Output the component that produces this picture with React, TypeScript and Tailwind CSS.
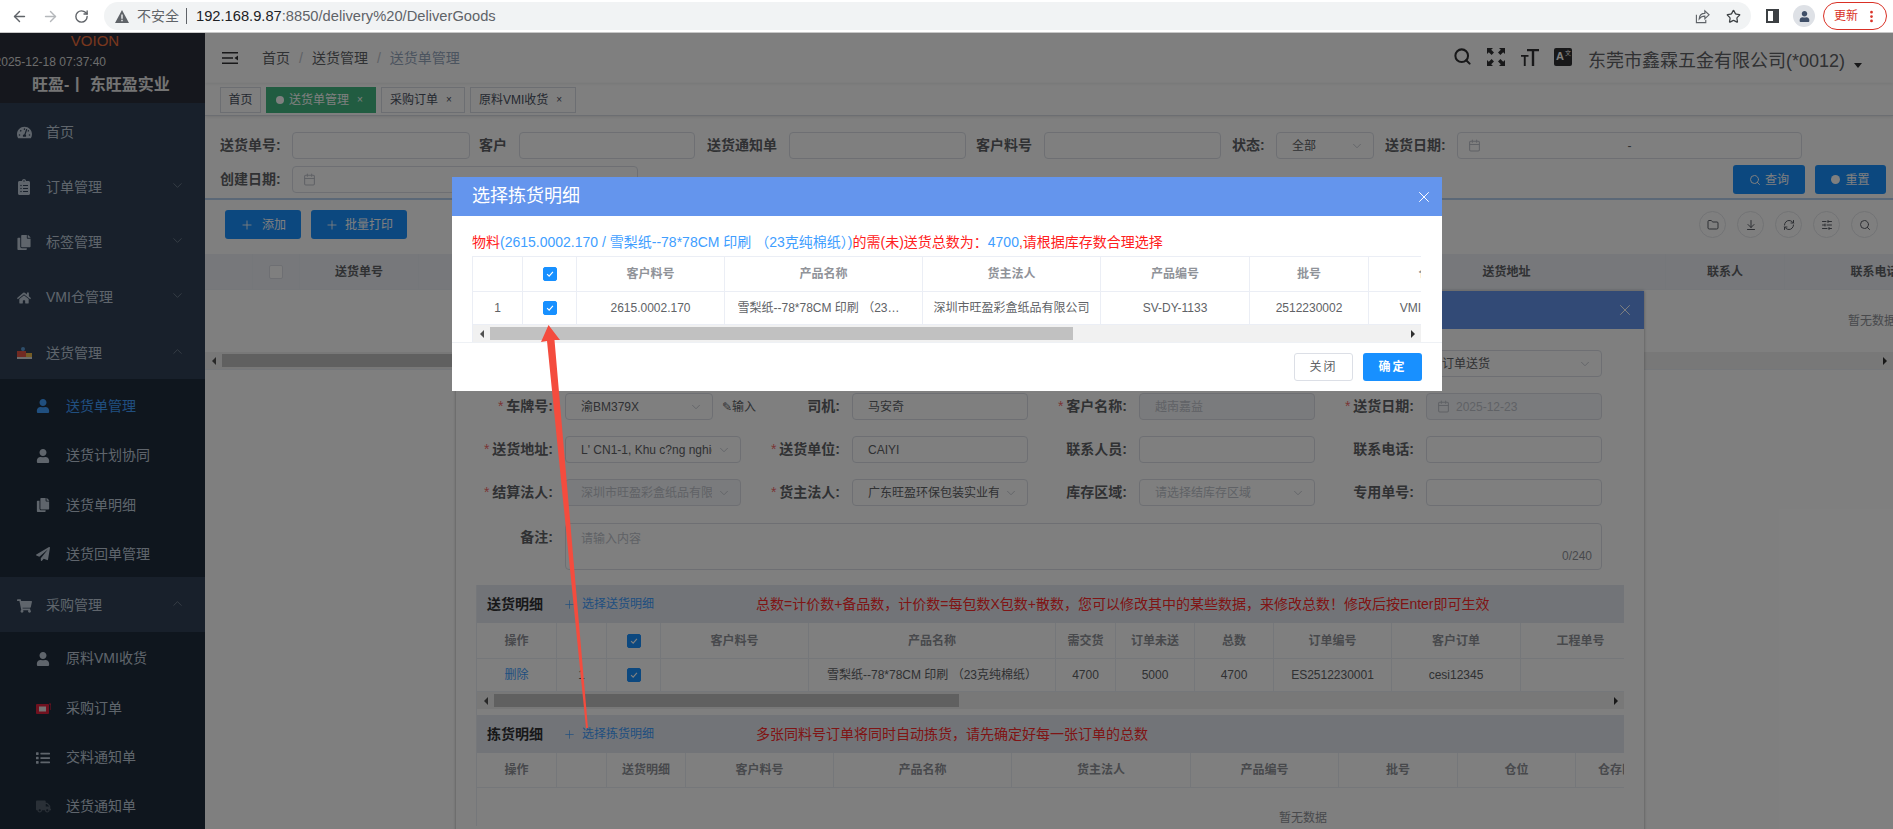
import type { ReactNode } from 'react';
import {
  ArrowDownToLine,
  ArrowLeft,
  ArrowRight,
  Calendar,
  ChevronDown,
  ChevronUp,
  Folder,
  MoreVertical,
  Plus,
  RefreshCw,
  RotateCw,
  Search,
  SlidersHorizontal,
  Star,
  X,
} from 'lucide-react';
import {
  FaClipboardList,
  FaCopy,
  FaHome,
  FaList,
  FaPaperPlane,
  FaShoppingCart,
  FaTachometerAlt,
  FaTruck,
  FaUser,
} from 'react-icons/fa';

function Box({ className = '', children }: { className?: string; children?: ReactNode }) {
  return (
    <div className={`flex h-[27px] shrink-0 items-center rounded-[4px] border border-[#dcdfe6] bg-white px-[15px] text-[12px] text-[#606266] ${className}`}>
      {children}
    </div>
  );
}

function Select({ className = '', children }: { className?: string; children?: ReactNode }) {
  return (
    <Box className={`justify-between !pr-[9px] overflow-hidden whitespace-nowrap ${className}`}>
      <span className="overflow-hidden">{children}</span>
      <ChevronDown className="ml-[5px] h-[14px] w-[14px] shrink-0 text-[#c0c4cc]" strokeWidth={1.5} />
    </Box>
  );
}

function Check({ on = true }: { on?: boolean }) {
  return (
    <span className={`mx-auto flex h-[14px] w-[14px] items-center justify-center rounded-[2px] border ${on ? 'border-[#1890ff] bg-[#1890ff]' : 'border-[#dcdfe6] bg-white'}`}>
      {on && (
        <svg viewBox="0 0 12 12" className="h-[10px] w-[10px]">
          <path d="M2.5 6.2 5 8.6 9.5 3.4" fill="none" stroke="white" strokeWidth="1.4" />
        </svg>
      )}
    </span>
  );
}

function Scrollbar({ thumb, className = '' }: { thumb: string; className?: string }) {
  return (
    <div className={`flex h-[17px] items-center bg-[#f1f1f1] ${className}`}>
      <span className="flex w-[17px] shrink-0 justify-center">
        <span className="h-0 w-0 border-y-[4px] border-r-[4px] border-y-transparent border-r-[#505050]" />
      </span>
      <div className={`h-[13px] shrink-0 bg-[#c1c1c1] ${thumb}`} />
      <span className="ml-auto flex w-[17px] shrink-0 justify-center">
        <span className="h-0 w-0 border-y-[4px] border-l-[4px] border-y-transparent border-l-[#303030]" />
      </span>
    </div>
  );
}

function Cell({ w, head, children }: { w: string; head?: boolean; children?: ReactNode }) {
  return (
    <div className={`flex shrink-0 items-center justify-center overflow-hidden whitespace-nowrap border-r border-[#ebeef5] text-[12px] ${w} ${head ? 'font-bold text-[#909399]' : 'text-[#606266]'}`}>
      {children}
    </div>
  );
}

function Row({ h, children, className = '' }: { h: string; children: ReactNode; className?: string }) {
  return <div className={`flex overflow-hidden border-b border-[#ebeef5] ${h} ${className}`}>{children}</div>;
}

function Label({ className = '', children }: { className?: string; children: ReactNode }) {
  return <span className={`shrink-0 text-[14px] font-bold text-[#606266] ${className}`}>{children}</span>;
}

function FormItem({ label, required, children }: { label: string; required?: boolean; children: ReactNode }) {
  return (
    <div className="flex items-center justify-end">
      <Label className="mr-[12px] whitespace-nowrap">
        {required && <span className="mr-[3px] font-normal text-[#f56c6c]">*</span>}
        {label}
      </Label>
      {children}
    </div>
  );
}

function MenuItem({ icon, label, open, closed }: { icon: ReactNode; label: string; open?: boolean; closed?: boolean }) {
  return (
    <div className="flex h-[55.5px] items-center pl-[17px] pt-[3px] text-[14px] text-[#bfcbd9]">
      <span className="flex w-[29px] shrink-0 items-center">{icon}</span>
      <span>{label}</span>
      {closed && <ChevronDown className="ml-auto mr-[20px] mb-[4px] h-[15px] w-[15px] text-[#7e8a99]" strokeWidth={1.2} />}
      {open && <ChevronUp className="ml-auto mr-[20px] mb-[4px] h-[15px] w-[15px] text-[#7e8a99]" strokeWidth={1.2} />}
    </div>
  );
}

function SubItem({ icon, label, active }: { icon: ReactNode; label: string; active?: boolean }) {
  return (
    <div className={`flex h-[49.5px] items-center bg-[#1f2d3d] pl-[36px] pt-[5px] text-[14px] ${active ? 'text-[#409eff]' : 'text-[#bfcbd9]'}`}>
      <span className="flex w-[30px] shrink-0 items-center">{icon}</span>
      <span>{label}</span>
    </div>
  );
}

function ForkliftIcon() {
  return (
    <svg viewBox="0 0 15 12" className="h-[12px] w-[15px]">
      <rect x="0" y="4" width="9" height="6" fill="#e25545" />
      <circle cx="6" cy="2" r="2" fill="#5b9bd5" />
      <rect x="9" y="6" width="6" height="4" fill="#e8b84a" />
      <rect x="0" y="10" width="15" height="2" fill="#d9d9d9" />
    </svg>
  );
}

function TicketIcon() {
  return (
    <svg viewBox="0 0 15 11" className="h-[11px] w-[15px]">
      <rect x="0" y="1" width="13" height="10" rx="1" fill="#e0223e" />
      <rect x="3" y="3.5" width="7" height="5" fill="#e6e6e6" />
      <path d="M13 1h2v6" fill="none" stroke="#e0223e" strokeWidth="1.2" />
    </svg>
  );
}

const subIcon = 'h-[14px] w-[14px]';

function Sidebar() {
  return (
    <aside className="flex h-full w-[205px] shrink-0 flex-col overflow-hidden bg-[#304156]">
      <div className="flex h-[70px] shrink-0 flex-col bg-[#2b2f3a] text-white">
        <div className="w-[190px] text-center text-[15px] leading-[16px] text-[#f0703a]">VOION</div>
        <div className="mt-[5px] flex w-[106px] justify-end whitespace-nowrap text-[12px] leading-[16px] text-[#d8d8d8]">2025-12-18 07:37:40</div>
        <div className="mt-[5px] pl-[32px] text-[16px] font-bold leading-[20px] text-[#e8e8e8]">旺盈-丨 东旺盈实业</div>
      </div>
      <MenuItem icon={<FaTachometerAlt className="h-[15px] w-[15px]" />} label="首页" />
      <MenuItem icon={<FaClipboardList className="h-[16px] w-[14px]" />} label="订单管理" closed />
      <MenuItem icon={<FaCopy className="h-[15px] w-[14px]" />} label="标签管理" closed />
      <MenuItem icon={<FaHome className="h-[14px] w-[14px]" />} label="VMI仓管理" closed />
      <MenuItem icon={<ForkliftIcon />} label="送货管理" open />
      <SubItem icon={<FaUser className={subIcon} />} label="送货单管理" active />
      <SubItem icon={<FaUser className={subIcon} />} label="送货计划协同" />
      <SubItem icon={<FaCopy className={subIcon} />} label="送货单明细" />
      <SubItem icon={<FaPaperPlane className={subIcon} />} label="送货回单管理" />
      <MenuItem icon={<FaShoppingCart className="h-[14px] w-[15px]" />} label="采购管理" open />
      <SubItem icon={<FaUser className={subIcon} />} label="原料VMI收货" />
      <SubItem icon={<TicketIcon />} label="采购订单" />
      <SubItem icon={<FaList className={subIcon} />} label="交料通知单" />
      <SubItem icon={<FaTruck className="h-[13px] w-[15px] text-[#55606e]" />} label="送货通知单" />
    </aside>
  );
}

function Tab({ label, active, className = '' }: { label: string; active?: boolean; className?: string }) {
  return (
    <div className={`flex h-[26px] shrink-0 items-center border text-[12px] ${active ? 'border-[#42b983] bg-[#42b983] text-white' : 'border-[#d8dce5] bg-white text-[#495060]'} ${className}`}>
      {active && <span className="mr-[5px] h-[8px] w-[8px] rounded-full bg-white" />}
      <span>{label}</span>
      <span className="ml-[8px] text-[10px] leading-none">×</span>
    </div>
  );
}

function BlueButton({ icon, label, className = '' }: { icon: ReactNode; label: string; className?: string }) {
  return (
    <button className={`flex h-[29px] shrink-0 items-center justify-center rounded-[3px] bg-[#1890ff] text-[12px] text-white ${className}`}>
      {icon}
      {label}
    </button>
  );
}

function RoundButton({ children }: { children: ReactNode }) {
  return (
    <span className="flex h-[27px] w-[27px] items-center justify-center rounded-full border border-[#e4e6ea] bg-white text-[#5a5e66]">
      {children}
    </span>
  );
}

function DateBox({ className = '', dash }: { className?: string; dash?: boolean }) {
  return (
    <Box className={`!px-[10px] ${className}`}>
      <Calendar className="h-[13px] w-[13px] text-[#c0c4cc]" />
      {dash && <span className="flex-1 pr-[13px] text-center">-</span>}
    </Box>
  );
}

function MainPage() {
  return (
    <main className="flex h-full min-w-0 flex-1 flex-col overflow-hidden bg-white">
      <header className="flex h-[50px] shrink-0 items-center pl-[17px] pr-[31px] shadow-[0_1px_3px_rgba(0,21,41,0.08)]">
        <svg viewBox="0 0 16 14" className="h-[14px] w-[16px] text-[#303133]">
          <path d="M0 1h16v1.6H0zM0 6.2h11v1.6H0zM0 11.4h16V13H0z" fill="currentColor" />
          <path d="M16 4.5v5L12.5 7z" fill="currentColor" />
        </svg>
        <div className="ml-[24px] flex items-center whitespace-nowrap text-[14px] text-[#606266]">
          <span>首页</span>
          <span className="mx-[9px] text-[#c0c4cc]">/</span>
          <span>送货管理</span>
          <span className="mx-[9px] text-[#c0c4cc]">/</span>
          <span className="text-[#97a8be]">送货单管理</span>
        </div>
        <div className="ml-auto flex items-center text-[#303133]">
          <Search className="mb-[3px] h-[19px] w-[19px]" strokeWidth={2.6} />
          <svg viewBox="0 0 18 18" className="mb-[3px] ml-[15px] h-[18px] w-[18px]" fill="currentColor">
            <path d="M0 0h6L4.2 1.8 7 4.6 4.6 7 1.8 4.2 0 6zM18 0v6l-1.8-1.8L13.4 7 11 4.6l2.8-2.8L12 0zM0 18v-6l1.8 1.8L4.6 11 7 13.4l-2.8 2.8L6 18zM18 18h-6l1.8-1.8L11 13.4l2.4-2.4 2.8 2.8L18 12z" />
          </svg>
          <svg viewBox="0 0 18 18" className="mb-[3px] ml-[16px] h-[18px] w-[18px]" fill="currentColor">
            <path d="M6 1h12v2.2h-4.8V18h-2.4V3.2H6zM0 7h7.5v1.8H4.7V18H2.8V8.8H0z" />
          </svg>
          <span className="relative mb-[3px] ml-[15px] flex h-[18px] w-[18px] items-center rounded-[2px] bg-[#303133] pl-[2px] text-[11px] font-bold leading-none text-white">
            A
            <span className="absolute right-[1px] top-[2px] text-[6px] font-normal">文</span>
          </span>
          <span className="ml-[16px] mt-[7px] whitespace-nowrap text-[18px] text-[#606266]">东莞市鑫霖五金有限公司(*0012)</span>
          <span className="ml-[9px] mt-[14px] h-0 w-0 border-x-[4px] border-t-[5px] border-x-transparent border-t-[#303133]" />
        </div>
      </header>
      <div className="flex h-[33px] shrink-0 items-center gap-[5px] border-b border-[#d8dce5] pl-[15px] pt-[1px] shadow-[0_1px_3px_rgba(0,0,0,0.1)]">
        <div className="flex h-[26px] w-[41px] shrink-0 items-center justify-center border border-[#d8dce5] text-[12px] text-[#495060]">首页</div>
        <Tab label="送货单管理" active className="w-[110px] pl-[9px]" />
        <Tab label="采购订单" className="w-[84px] pl-[8px]" />
        <Tab label="原料VMI收货" className="w-[106px] pl-[8px]" />
      </div>
      <section className="h-[82px] shrink-0 pl-[15px] pt-[16px]">
        <div className="flex items-center">
          <Label className="w-[72px]">送货单号:</Label>
          <Box className="w-[178px]" />
          <Label className="ml-[9px] w-[40px]">客户</Label>
          <Box className="w-[176px]" />
          <Label className="ml-[12px] w-[82px]">送货通知单</Label>
          <Box className="w-[177px]" />
          <Label className="ml-[10px] w-[68px]">客户料号</Label>
          <Box className="w-[177px]" />
          <Label className="ml-[11px] w-[44px]">状态:</Label>
          <Select className="w-[98px]">全部</Select>
          <Label className="ml-[11px] w-[72px]">送货日期:</Label>
          <DateBox dash className="w-[345px]" />
        </div>
        <div className="mt-[6px] flex items-center pr-[7px]">
          <Label className="w-[72px]">创建日期:</Label>
          <DateBox className="w-[346px]" />
          <BlueButton icon={<Search className="mr-[4px] h-[12px] w-[12px]" />} label="查询" className="ml-auto w-[72px]" />
          <BlueButton icon={<span className="mr-[5px] h-[9px] w-[9px] rounded-full bg-white" />} label="重置" className="ml-[10px] w-[71px]" />
        </div>
      </section>
      <div className="flex h-[56px] shrink-0 items-start border-t-2 border-[#b6d0ee] pl-[20px] pr-[15px] pt-[10px]">
        <BlueButton icon={<Plus className="mr-[8px] h-[14px] w-[14px]" strokeWidth={1.5} />} label="添加" className="w-[76px]" />
        <BlueButton icon={<Plus className="mr-[6px] h-[14px] w-[14px]" strokeWidth={1.5} />} label="批量打印" className="ml-[10px] w-[96px]" />
        <div className="ml-auto flex gap-[11px] pt-[1px]">
          <RoundButton><Folder className="h-[12px] w-[12px]" /></RoundButton>
          <RoundButton><ArrowDownToLine className="h-[12px] w-[12px]" /></RoundButton>
          <RoundButton><RefreshCw className="h-[12px] w-[12px]" /></RoundButton>
          <RoundButton><SlidersHorizontal className="h-[12px] w-[12px]" /></RoundButton>
          <RoundButton><Search className="h-[12px] w-[12px]" /></RoundButton>
        </div>
      </div>
      <Row h="h-[36px] shrink-0" className="bg-[#eef1f6]">
        <Cell head w="w-[48px]" />
        <Cell head w="w-[47px]"><Check on={false} /></Cell>
        <Cell head w="w-[119px]"><span className="text-[#606266]">送货单号</span></Cell>
        <Cell head w="w-[116px]"><span className="text-[#606266]">送货类型</span></Cell>
        <Cell head w="w-[813px]" />
        <Cell head w="w-[318px]"><span className="text-[#606266]">送货地址</span></Cell>
        <Cell head w="w-[119px]"><span className="text-[#606266]">联系人</span></Cell>
        <Cell head w="w-[180px]"><span className="text-[#606266]">联系电话</span></Cell>
      </Row>
      <div className="flex h-[62px] shrink-0 items-center justify-start overflow-hidden whitespace-nowrap pl-[1643px] text-[12px] text-[#909399]">暂无数据</div>
      <Scrollbar thumb="w-[1000px]" />
      <div className="border-t border-[#ebeef5]" />
    </main>
  );
}

const deliverCols = ['w-[80px]', 'w-[50px]', 'w-[54px]', 'w-[148px]', 'w-[247px]', 'w-[60px]', 'w-[79px]', 'w-[79px]', 'w-[118px]', 'w-[129px]', 'w-[120px]'];
const deliverHead = ['操作', '', '', '客户料号', '产品名称', '需交货', '订单未送', '总数', '订单编号', '客户订单', '工程单号'];
const deliverBody = ['', '1', '', '', '雪梨纸--78*78CM 印刷 （23克纯棉纸）', '4700', '5000', '4700', 'ES2512230001', 'cesi12345', ''];
const pickCols = ['w-[80px]', 'w-[50px]', 'w-[79px]', 'w-[148px]', 'w-[178px]', 'w-[179px]', 'w-[148px]', 'w-[119px]', 'w-[118px]', 'w-[105px]'];
const pickHead = ['操作', '', '送货明细', '客户料号', '产品名称', '货主法人', '产品编号', '批号', '仓位', '仓存区域名'];

function SectionBar({ title, link, note }: { title: string; link: string; note: string }) {
  return (
    <div className="flex h-[38px] items-center bg-[#e4e8f0] pl-[10px] whitespace-nowrap">
      <span className="w-[76px] text-[14px] font-bold text-[#303133]">{title}</span>
      <Plus className="h-[13px] w-[13px] text-[#409eff]" strokeWidth={1.3} />
      <span className="ml-[6px] w-[174px] text-[12px] text-[#409eff]">{link}</span>
      <span className="text-[14px] text-[#ff2a2a]">{note}</span>
    </div>
  );
}

function DeliverDialog() {
  return (
    <div className="absolute left-[456px] top-[258px] h-[600px] w-[1188px] bg-white shadow-[0_0_3px_rgba(0,0,0,0.35)]">
      <div className="flex h-[38px] items-center justify-end bg-[#6495ed] pr-[10px] text-white">
        <X className="h-[18px] w-[18px]" strokeWidth={1.3} />
      </div>
      <div className="grid w-[1146px] grid-cols-[285px_287px_287px_287px] gap-y-[16px] pt-[21px]">
        <div />
        <div />
        <div />
        <FormItem label="送货方式:"><Select className="w-[176px]">订单送货</Select></FormItem>
        <FormItem label="车牌号:" required>
          <div className="flex w-[176px] items-center">
            <Select className="w-[148px]">渝BM379X</Select>
            <span className="ml-[9px] whitespace-nowrap text-[12px] text-[#606266]">✎输入</span>
          </div>
        </FormItem>
        <FormItem label="司机:"><Box className="w-[176px]">马安奇</Box></FormItem>
        <FormItem label="客户名称:" required><Box className="w-[176px] !bg-[#f5f7fa] !text-[#c0c4cc]">越南嘉益</Box></FormItem>
        <FormItem label="送货日期:" required>
          <Box className="w-[176px] !bg-[#f5f7fa] !px-[10px] !text-[#c0c4cc]"><Calendar className="mr-[6px] h-[13px] w-[13px]" />2025-12-23</Box>
        </FormItem>
        <FormItem label="送货地址:" required><Select className="w-[176px]">L' CN1-1, Khu c?ng nghiệp</Select></FormItem>
        <FormItem label="送货单位:" required><Box className="w-[176px]">CAIYI</Box></FormItem>
        <FormItem label="联系人员:"><Box className="w-[176px]" /></FormItem>
        <FormItem label="联系电话:"><Box className="w-[176px]" /></FormItem>
        <FormItem label="结算法人:" required><Select className="w-[176px] !bg-[#f5f7fa] !text-[#c0c4cc]">深圳市旺盈彩盒纸品有限公司</Select></FormItem>
        <FormItem label="货主法人:" required><Select className="w-[176px]">广东旺盈环保包装实业有限公司</Select></FormItem>
        <FormItem label="库存区域:"><Select className="w-[176px] !text-[#c0c4cc]">请选择结库存区域</Select></FormItem>
        <FormItem label="专用单号:"><Box className="w-[176px]" /></FormItem>
      </div>
      <div className="mt-[17px] flex w-[1146px] items-start">
        <Label className="w-[97px] pt-[4px] text-right">备注:</Label>
        <div className="relative ml-[12px] h-[47px] w-[1037px] rounded-[4px] border border-[#dcdfe6] px-[15px] py-[6px] text-[12px] text-[#c0c4cc]">
          请输入内容
          <span className="absolute bottom-[4px] right-[9px] text-[12px] text-[#909399]">0/240</span>
        </div>
      </div>
      <div className="ml-[20px] mt-[15px] w-[1148px] border-l border-[#ebeef5]">
        <SectionBar title="送货明细" link="选择送货明细" note="总数=计价数+备品数，计价数=每包数X包数+散数，您可以修改其中的某些数据，来修改总数！修改后按Enter即可生效" />
        <Row h="h-[36px]">
          {deliverCols.map((w, i) => (
            <Cell head key={w + i} w={w}>{i === 2 ? <Check /> : deliverHead[i]}</Cell>
          ))}
        </Row>
        <Row h="h-[33px]">
          {deliverCols.map((w, i) => (
            <Cell key={w + i} w={w}>
              {i === 0 ? <span className="text-[#409eff]">删除</span> : i === 2 ? <Check /> : deliverBody[i]}
            </Cell>
          ))}
        </Row>
        <Scrollbar thumb="w-[465px]" />
        <div className="h-[6px]" />
        <SectionBar title="拣货明细" link="选择拣货明细" note="多张同料号订单将同时自动拣货，请先确定好每一张订单的总数" />
        <Row h="h-[35px]">
          {pickCols.map((w, i) => (
            <Cell head key={w + i} w={w}>{pickHead[i]}</Cell>
          ))}
        </Row>
        <div className="pl-[802px] pt-[22px] text-[12px] leading-[16px] text-[#909399]">暂无数据</div>
      </div>
    </div>
  );
}

function PickModal() {
  return (
    <div className="absolute left-[452px] top-[144px] w-[990px] bg-white">
      <div className="flex h-[39px] items-center justify-between bg-[#6495ed] pl-[20px] pr-[9px] text-white">
        <span className="text-[18px]">选择拣货明细</span>
        <X className="h-[18px] w-[18px]" strokeWidth={1.3} />
      </div>
      <div className="px-[20px] pt-[18px]">
        <p className="whitespace-nowrap text-[14px] leading-[17px] text-[#ff2020]">
          物料<span className="text-[#409eff]">(2615.0002.170 / 雪梨纸--78*78CM 印刷 （23克纯棉纸）)</span>的需(未)送货总数为：<span className="text-[#409eff]">4700</span>,请根据库存数合理选择
        </p>
        <div className="mt-[5px] w-[949px] overflow-hidden border-l border-t border-[#ebeef5]">
          <Row h="h-[35px]" className="w-[1000px]">
            <Cell head w="w-[50px]" />
            <Cell head w="w-[54px]"><Check /></Cell>
            <Cell head w="w-[148px]">客户料号</Cell>
            <Cell head w="w-[198px]">产品名称</Cell>
            <Cell head w="w-[178px]">货主法人</Cell>
            <Cell head w="w-[149px]">产品编号</Cell>
            <Cell head w="w-[119px]">批号</Cell>
            <Cell head w="w-[124px]">仓位</Cell>
          </Row>
          <Row h="h-[33px]" className="w-[1000px]">
            <Cell w="w-[50px]">1</Cell>
            <Cell w="w-[54px]"><Check /></Cell>
            <Cell w="w-[148px]">2615.0002.170</Cell>
            <Cell w="w-[198px]"><span className="w-[172px] overflow-hidden text-ellipsis">雪梨纸--78*78CM 印刷 （23克纯棉纸）</span></Cell>
            <Cell w="w-[178px]">深圳市旺盈彩盒纸品有限公司</Cell>
            <Cell w="w-[149px]">SV-DY-1133</Cell>
            <Cell w="w-[119px]">2512230002</Cell>
            <Cell w="w-[124px]">VMI-仓库一</Cell>
          </Row>
          <Scrollbar thumb="w-[583px]" />
        </div>
      </div>
      <div className="flex h-[49px] items-center justify-end gap-[10px] border-t border-[#eef1f5] pr-[20px]">
        <button className="h-[28px] w-[59px] rounded-[3px] border border-[#dcdfe6] bg-white text-[12px] tracking-[2px] text-[#606266]">关闭</button>
        <button className="h-[28px] w-[59px] rounded-[3px] bg-[#1890ff] text-[12px] font-bold tracking-[2px] text-white">确定</button>
      </div>
    </div>
  );
}

function BrowserBar() {
  return (
    <div className="flex h-[33px] shrink-0 items-center border-b border-[#c8c8c8] bg-white pr-[5px]">
      <ArrowLeft className="ml-[11px] h-[17px] w-[17px] text-[#5f6368]" strokeWidth={2} />
      <ArrowRight className="ml-[14px] h-[17px] w-[17px] text-[#b5b8bb]" strokeWidth={2} />
      <RotateCw className="ml-[15px] h-[15px] w-[15px] text-[#5f6368]" strokeWidth={2.2} />
      <div className="ml-[15px] flex h-[28px] w-[1647px] items-center rounded-full bg-[#f1f3f4] pl-[11px] pr-[10px] text-[14px]">
        <svg viewBox="0 0 14 13" className="h-[13px] w-[14px]">
          <path d="M7 0 14 13H0z" fill="#5f6368" />
          <path d="M6.3 4.5h1.4v4.2H6.3zM6.3 9.8h1.4v1.4H6.3z" fill="#f1f3f4" />
        </svg>
        <span className="ml-[8px] text-[#5f6368]">不安全</span>
        <span className="mx-[7px] h-[16px] w-px bg-[#5f6368]" />
        <span className="ml-[2px] text-[14.7px] text-[#202124]">192.168.9.87</span>
        <span className="text-[14.7px] text-[#5f6368]">:8850/delivery%20/DeliverGoods</span>
        <svg viewBox="0 0 16 16" className="ml-auto h-[15px] w-[15px]" fill="none" stroke="#5f6368" strokeWidth="1.2">
          <path d="M1.5 6v8.5h10V11.5" />
          <path d="M4.5 10.5c.3-4 3-5.8 6-5.8V2l4.5 4.2-4.5 4.2V7.6c-2.5 0-4.5.8-6 2.9z" />
        </svg>
        <Star className="ml-[16px] h-[15px] w-[15px] text-[#3c4043]" strokeWidth={2} />
      </div>
      <span className="ml-[15px] h-[14px] w-[13px] border-2 border-r-[6px] border-[#3c4043]" />
      <span className="ml-[14px] flex h-[22px] w-[22px] items-center justify-center rounded-full bg-[#dee1e6]">
        <FaUser className="h-[11px] w-[11px] text-[#3f4f68]" />
      </span>
      <div className="ml-[8px] flex h-[28px] w-[64px] items-center rounded-full border border-[#d93025] pl-[10px] text-[12px] text-[#d93025]">
        更新
        <MoreVertical className="ml-[6px] h-[15px] w-[15px]" strokeWidth={2.4} />
      </div>
    </div>
  );
}

export default function App() {
  return (
    <div className="flex h-screen w-full flex-col overflow-hidden bg-white [font-family:'Liberation_Sans','Noto_Sans_CJK_SC',sans-serif]">
      <BrowserBar />
      <div className="relative min-h-0 flex-1 overflow-hidden">
        <div className="flex h-full">
          <Sidebar />
          <MainPage />
        </div>
        <DeliverDialog />
        <div className="absolute inset-0 bg-black/50" />
        <PickModal />
        {/* annotation arrow */}
        <svg viewBox="0 0 1893 796" className="pointer-events-none absolute left-0 top-0 h-[796px] w-[1893px]">
          <polygon points="548.5,292 560,307 554.5,307 588,695 586,695 547,308 541,309" fill="#f44c3e" />
        </svg>
      </div>
    </div>
  );
}
